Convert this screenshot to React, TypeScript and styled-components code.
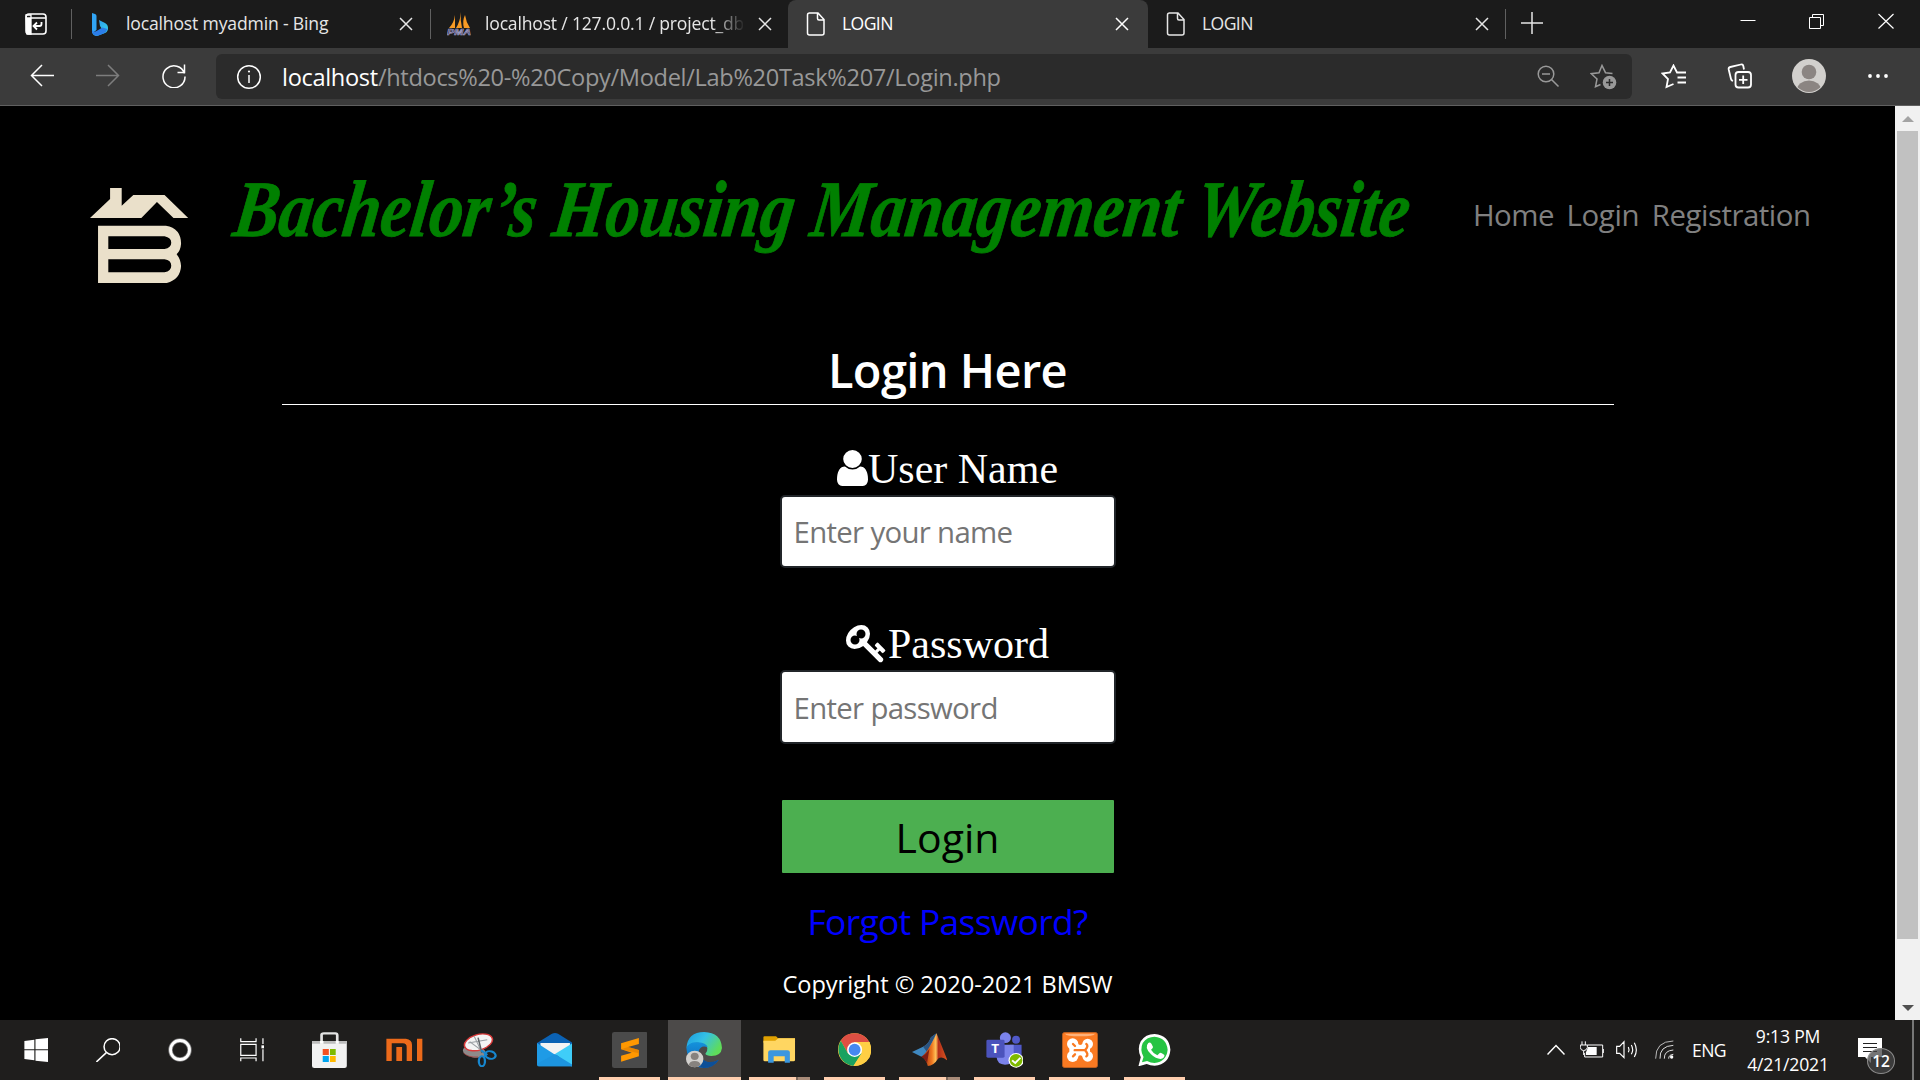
import React from "react";
import styled, { createGlobalStyle } from "styled-components";

const GlobalStyle = createGlobalStyle`
  * { box-sizing: border-box; }
  html, body { margin: 0; padding: 0; background: #000; overflow: hidden; }
  body { font-family: "Open Sans", "Noto Sans", sans-serif; }
  svg { display: block; flex: none; }
`;

const Desktop = styled.div`
  width: 1920px;
  height: 1080px;
  display: flex;
  flex-direction: column;
  overflow: hidden;
`;

/* ---------- Tab strip ---------- */

const TabStrip = styled.div`
  height: 48px;
  flex: none;
  display: flex;
  background: #1b1b1b;
  color: #e6e6e6;
`;

const TabActions = styled.div`
  width: 71px;
  height: 48px;
  padding: 13px 0 0 25px;
`;

const TabDivider = styled.div`
  width: 1px;
  height: 30px;
  margin-top: 9px;
  background: #606060;
`;

const TabBox = styled.div<{ $width: number; $active?: boolean }>`
  width: ${(p) => p.$width}px;
  height: 48px;
  flex: none;
  display: flex;
  align-items: center;
  padding-left: 16px;
  background: ${(p) => (p.$active ? "#3b3b3b" : "transparent")};
  color: ${(p) => (p.$active ? "#fff" : "#e6e6e6")};
  border-radius: 8px 8px 0 0;
`;

const TabIcon = styled.div`
  width: 24px;
  display: flex;
  justify-content: center;
`;

const TabLabel = styled.div<{ $fade?: boolean; $spacing?: number }>`
  width: 258px;
  margin: 0 15px 2px 14px;
  font-size: 17.6px;
  line-height: 30px;
  letter-spacing: ${(p) => p.$spacing ?? 0}px;
  white-space: nowrap;
  overflow: hidden;
  ${(p) => (p.$fade ? "mask-image: linear-gradient(90deg, #000 88%, transparent 101%);" : "")}
`;

const NewTab = styled.div`
  width: 54px;
  padding: 12px 0 0 15px;
`;

const WindowButtons = styled.div`
  margin-left: auto;
  display: flex;
  gap: 53px;
  padding: 13px 26px 0 0;
`;

/* ---------- Toolbar ---------- */

const Toolbar = styled.div`
  height: 58px;
  flex: none;
  display: flex;
  align-items: flex-start;
  background: #3b3b3b;
  border-bottom: 1px solid #606060;
  color: #fff;
`;

const NavButtons = styled.div`
  width: 216px;
  display: flex;
  gap: 42px;
  padding: 16px 0 0 30px;
`;

const AddressBar = styled.div`
  width: 1416px;
  height: 45px;
  margin-top: 6px;
  padding: 0 15px 0 20px;
  display: flex;
  align-items: center;
  background: #2b2b2b;
  border-radius: 6px;
`;

const Url = styled.div`
  flex: 1;
  margin-left: 20px;
  font-size: 23.6px;
  line-height: 44px;
  letter-spacing: -0.33px;
  color: #989898;
  white-space: nowrap;
`;

const UrlHost = styled.span`
  color: #fff;
`;

const AddressActions = styled.div`
  display: flex;
  align-items: center;
  gap: 30px;
  color: #999;
`;

const ToolbarActions = styled.div`
  display: flex;
  align-items: center;
  height: 56px;
  padding-left: 29px;
  gap: 40px;
`;

/* ---------- Page ---------- */

const Viewport = styled.div`
  height: 914px;
  flex: none;
  display: flex;
  background: #000;
`;

const Page = styled.div`
  width: 1895px;
  display: flex;
  flex-direction: column;
  align-items: center;
`;

const SiteHeader = styled.header`
  width: 100%;
  height: 234px;
  flex: none;
  display: flex;
  align-items: flex-start;
  padding: 49px 0 0 90px;
`;

const LogoBox = styled.div`
  width: 141px;
  padding-top: 33px;
`;

const TitleBox = styled.div`
  width: 1242px;
`;

const SiteTitle = styled.h1`
  margin: 3px 0 0;
  display: inline-block;
  font: italic 700 80px/102px "Liberation Serif", serif;
  color: #008000;
  -webkit-text-stroke: 0.8px #008000;
  white-space: nowrap;
  transform: scaleX(0.847) skewX(-9deg);
  transform-origin: 0 78%;
`;

const SiteNav = styled.nav`
  display: flex;
  gap: 12.5px;
  padding-top: 40px;
`;

const NavLink = styled.a<{ $spacing: number }>`
  font-size: 29.4px;
  line-height: 40px;
  letter-spacing: ${(p) => p.$spacing}px;
  color: #808080;
`;

const Heading = styled.h2`
  margin: 0;
  font-size: 47px;
  font-weight: 600;
  line-height: 60px;
  letter-spacing: -0.6px;
  color: #fff;
`;

const Rule = styled.div`
  width: 1332px;
  height: 1px;
  margin-top: 4px;
  background: #fff;
`;

const FieldLabel = styled.label<{ $top: number }>`
  height: 49px;
  margin-top: ${(p) => p.$top}px;
  display: flex;
  align-items: center;
  padding-top: 1px;
  font: 42px/49px "Liberation Serif", serif;
  color: #fff;
`;

const Field = styled.input<{ $height: number }>`
  width: 336px;
  height: ${(p) => p.$height}px;
  margin-top: 2px;
  padding: 1px 0 0 12px;
  border: 2px solid #212529;
  border-radius: 5px;
  background: #fff;
  outline: none;
  font: 29.4px "Open Sans", sans-serif;
  letter-spacing: -0.68px;
  &::placeholder { color: #757575; opacity: 1; }
`;

const LoginButton = styled.button`
  width: 332px;
  height: 73px;
  margin-top: 56px;
  padding: 0;
  border: 0;
  border-radius: 1px;
  background: #4caf50;
  color: #000;
  font: 41px/75px "Open Sans", sans-serif;
`;

const ForgotLink = styled.a`
  margin-top: 23px;
  font-size: 35.4px;
  line-height: 50px;
  letter-spacing: -0.7px;
  color: #0000ff;
`;

const Copyright = styled.div`
  margin-top: 18px;
  font-size: 23.6px;
  line-height: 40px;
  letter-spacing: -0.05px;
  color: #fff;
`;

const Scrollbar = styled.div`
  width: 25px;
  background: #f1f1f1;
  display: flex;
  flex-direction: column;
  align-items: center;
  padding: 10px 0 9px;
  justify-content: space-between;
`;

const Thumb = styled.div`
  width: 21px;
  height: 808px;
  margin: 9px 0 auto;
  background: #c1c1c1;
`;

/* ---------- Taskbar ---------- */

const Taskbar = styled.div`
  height: 60px;
  flex: none;
  display: flex;
  background: #1f1e1d;
  color: #fff;
`;

const SystemSlots = styled.div`
  width: 292px;
  display: flex;
`;

const SystemSlot = styled.div`
  width: 72px;
  display: flex;
  align-items: center;
  justify-content: center;
`;

const AppSlot = styled.div`
  width: 75px;
  display: flex;
  flex-direction: column;
  align-items: center;
`;

const AppFace = styled.div<{ $active?: boolean }>`
  width: 73px;
  height: 57px;
  padding-top: 3px;
  display: flex;
  align-items: center;
  justify-content: center;
  background: ${(p) => (p.$active ? "#4c4a49" : "transparent")};
`;

const RunningBar = styled.div<{ $wide?: boolean; $stacked?: boolean }>`
  width: ${(p) => (p.$wide ? 73 : 61)}px;
  height: 3px;
  background: ${(p) =>
    p.$stacked
      ? "linear-gradient(90deg, #ffcfaf 47px, #7c6759 47px, #7c6759 49px, #a98c79 49px)"
      : "#ffcfaf"};
`;

const Tray = styled.div`
  flex: 1;
  display: flex;
  align-items: center;
  justify-content: flex-end;
`;

const TrayIcon = styled.div<{ $gap: number }>`
  margin-right: ${(p) => p.$gap}px;
`;

const Language = styled.div`
  width: 34px;
  font-size: 17.6px;
  line-height: 30px;
  letter-spacing: -0.6px;
`;

const Clock = styled.div`
  width: 90px;
  margin: 0 25px 0 17px;
  font-size: 17.6px;
  line-height: 28px;
  letter-spacing: -0.2px;
  text-align: center;
`;

const Notifications = styled.div`
  position: relative;
  width: 54px;
  height: 24px;
`;

const Badge = styled.span`
  position: absolute;
  left: 9px;
  top: 10px;
  width: 28px;
  height: 26px;
  border: 1px solid #8c8c8c;
  border-radius: 50%;
  background: rgba(70, 70, 70, 0.75);
  font-size: 15.5px;
  font-weight: 600;
  line-height: 24px;
  text-align: center;
`;

const ShowDesktop = styled.div`
  width: 8px;
  height: 60px;
  border-left: 2px solid #777;
`;

/* ---------- Drawings ---------- */

type ArtProps = { box: string; sx: number; sy?: number; children: React.ReactNode };

/* Draws a view box at 1/sx by 1/sy of its own units. */
const Art = ({ box, sx, sy = 3, children }: ArtProps) => {
  const [, , w, h] = box.split(" ").map(Number);
  return (
    <svg width={w / sx} height={h / sy} viewBox={box} preserveAspectRatio="none" fill="none">
      {children}
    </svg>
  );
};

const line = { stroke: "currentColor", strokeWidth: 1.5, fill: "none", vectorEffect: "non-scaling-stroke" as const };

const CloseX = () => (
  <svg width="14" height="14" viewBox="0 0 14 14"><path d="M1 1l12 12M13 1L1 13" {...line} /></svg>
);

const PageIcon = () => (
  <svg width="20" height="24" viewBox="0 0 20 24">
    <path d="M3 1h9l6 6.500V21q0 2-2 2H3.500q-2 0-2-2V3q0-2 2-2zM11.500 1v5.500q0 1.500 1.500 1.500h5" {...line} />
  </svg>
);

const BingIcon = () => (
  <svg width="18" height="24" viewBox="0 0 18 24">
    <defs>
      <linearGradient id="bing" x1="0" y1="0" x2="1" y2="1">
        <stop offset="0" stopColor="#2a8df0" /><stop offset="1" stopColor="#37dbe8" />
      </linearGradient>
    </defs>
    <path d="M1 1l3 1q1.500.5 1.500 2v14L1.500 21Q1 20 1 18z" fill="#31a5f5" />
    <path d="M8 8l6 3q3 1.500 3 5t-3 5l-8 3q-4 0-5-4l5 0 5-3-2-3z" fill="url(#bing)" />
    <path d="M1 18q1 3 4.500 1l6-3.500 5 1.500q-1 3-4 4.500l-5 2q-5 1-6.500-3.500z" fill="#2b7de9" />
  </svg>
);

const PmaIcon = () => (
  <svg width="24" height="26" viewBox="0 0 24 26">
    <path d="M8 4v13H2Q7 12 8 4zM14 1q-1 8 1 16H9Q13 11 14 1zM18 4q1 7 5 13h-6q-2-7 1-13z" fill="#f79a25" />
    <text x="0" y="24" textLength="24" lengthAdjust="spacingAndGlyphs" fontFamily="Liberation Sans" fontWeight="700" fontStyle="italic" fontSize="9.500" fill="#32305c" stroke="#aaa8cf" strokeWidth=".6">PMA</text>
  </svg>
);

const HouseLogo = () => (
  <Art box="68 115 221 286" sx={2.24}>
    <path fill="#eae0ca" d="M68 205L113 148V115H139V168L165 136H235L288 205H255L218 157L183 205z" />
    <path fill="#eae0ca" fillRule="evenodd" d="M86 228H238Q272 236 272 282Q271 302 262 314Q271 328 272 350Q270 390 240 400H86zM109 260V298H235Q250 294 250 279T235 260zM109 329V368H235Q250 364 250 348T235 329z" />
  </Art>
);

const UserIcon = () => (
  <svg width="31" height="36" viewBox="256 128 1280 1536" fill="#fff" preserveAspectRatio="none" style={{ marginBottom: 3 }}>
    <path d="M1536 1399q0 109-62.500 187t-150.500 78h-854q-88 0-150.500-78t-62.500-187q0-85 8.500-160.500t31.500-152 58.500-131 94-89 134.500-34.500q131 128 313 128t313-128q76 0 134.500 34.500t94 89 58.500 131 31.500 152 8.500 160.500zm-256-887q0 159-112.500 271.500t-271.500 112.500-271.500-112.500-112.500-271.500 112.500-271.500 271.500-112.500 271.500 112.500 112.500 271.500z" />
  </svg>
);

const KeyIcon = () => (
  <svg width="42" height="39" viewBox="0 128 1792 1664" fill="#fff" preserveAspectRatio="none">
    <path d="M832 512q0-80-56-136t-136-56-136 56-56 136q0 42 19 83-41-19-83-19-80 0-136 56t-56 136 56 136 136 56 136-56 56-136q0-42-19-83 41 19 83 19 80 0 136-56t56-136zm851 704q0 17-49 66t-66 49q-9 0-28.500-16t-36.500-33-38.500-40-24.500-26l-96 96 220 220q28 28 28 68 0 42-39 81t-81 39q-40 0-68-28l-671-671q-176 131-365 131-163 0-265.500-102.500t-102.500-265.500q0-160 95-313t248-248 313-95q163 0 265.500 102.500t102.500 265.500q0 189-131 365l355 355 96-96q-3-3-26-24.500t-40-38.500-33-36.500-16-28.500q0-17 49-66t66-49q13 0 23 10 6 6 46 44.500t82 79.500 86.500 86 73 78 28.500 41z" />
  </svg>
);

const StoreIcon = () => (
  <Art box="813 66 91 108" sx={2.613}>
    <path d="M838 100V74Q838 70 844 70H874Q879 70 879 76V100" stroke="#e3e3e3" strokeWidth="7" />
    <path d="M813 93H904V168Q904 174 898 174H819Q813 174 813 168z" fill="#f2f2f2" />
    <path d="M813 93H904V101H813z" fill="#bdbdbd" />
    <path d="M834 93h9v8h-9zM875 93h8v8h-8z" fill="#fff" />
    <path d="M841 117h16v18h-16z" fill="#f25022" /><path d="M860 117h15v18h-15z" fill="#7fba00" />
    <path d="M841 138h16v18h-16z" fill="#00a4ef" /><path d="M860 138h15v18h-15z" fill="#ffb900" />
  </Art>
);

const MiIcon = () => (
  <Art box="1008 85 96 70" sx={2.613}>
    <path fill="#ec6a1a" d="M1009 87H1060Q1076 89 1076 106V154H1062V112Q1062 101 1052 101H1023V154H1009zM1035 112H1050V154H1035zM1089 87H1103V154H1089z" />
  </Art>
);

const SnipIcon = () => (
  <Art box="1206 68 92 104" sx={2.613}>
    <ellipse cx="1238" cy="124" rx="30" ry="18" fill="#8f8a8a" transform="rotate(10 1238 124)" />
    <path d="M1210 128Q1222 142 1248 140" stroke="#a33b38" strokeWidth="2" />
    <ellipse cx="1249" cy="96" rx="38" ry="23" fill="#f4f4f4" stroke="#d93a3a" strokeWidth="4" transform="rotate(-20 1249 96)" />
    <path d="M1222 98L1272 88M1238 78L1258 126M1226 94L1264 126" stroke="#9a9fa3" strokeWidth="3" />
    <path d="M1248 82L1258 128" stroke="#5f6468" strokeWidth="4" />
    <ellipse cx="1280" cy="134" rx="14" ry="11" stroke="#1787cf" strokeWidth="6" transform="rotate(20 1280 134)" />
    <ellipse cx="1258" cy="153" rx="8" ry="15" stroke="#1787cf" strokeWidth="6" />
    <path d="M1256 120L1270 132L1262 142" stroke="#1787cf" strokeWidth="6" />
  </Art>
);

const MailIcon = () => (
  <Art box="1401 68 94 100" sx={2.613}>
    <path d="M1401 98L1440 70Q1448 66 1456 70L1495 98V120H1401z" fill="#0b62b4" />
    <path d="M1410 98H1487V120L1448 136L1410 120z" fill="#f3f3f3" />
    <path d="M1401 98L1495 168H1406Q1401 168 1401 162z" fill="#1f9be6" />
    <path d="M1495 98V160Q1495 168 1490 168L1448 131z" fill="#3fcdf8" />
    <path d="M1401 160L1448 131L1495 164V168H1403z" fill="#1d95e0" />
  </Art>
);

const SublimeIcon = () => (
  <Art box="53 66 91 108" sx={2.529}>
    <rect x="53" y="66" width="91" height="108" rx="6" fill="#4a4a4a" />
    <path d="M76 100L121 84V102L94 111L121 120V139L76 155V137L103 128L76 118z" fill="#ff9800" />
    <path d="M94 111L121 120V130L76 118z" fill="#dc7c00" opacity=".6" />
  </Art>
);

const EdgeIcon = () => (
  <Art box="243 66 92 108" sx={2.529}>
    <defs>
      <linearGradient id="edgeTop" x1="0" y1="0" x2="1" y2=".5">
        <stop offset="0" stopColor="#1a9be0" /><stop offset=".5" stopColor="#34c1e6" /><stop offset="1" stopColor="#5fdc5a" />
      </linearGradient>
      <linearGradient id="edgeSide" x1="0" y1="0" x2="0" y2="1">
        <stop offset="0" stopColor="#1492dc" /><stop offset="1" stopColor="#0f62b4" />
      </linearGradient>
    </defs>
    <path d="M244 114Q247 66 289 66Q332 68 334 114Q332 138 307 138Q294 137 292 131Q298 124 297 114Q293 99 272 98Q252 98 244 114z" fill="url(#edgeTop)" />
    <path d="M244 114Q250 95 274 97Q294 99 298 112Q280 104 275 124Q272 146 296 156Q310 160 326 149Q312 174 288 174Q248 170 244 114z" fill="url(#edgeSide)" />
    <path d="M275 124Q275 148 296 155Q312 158 326 149Q313 174 287 174Q262 166 275 124z" fill="#0c4f98" />
    <ellipse cx="265" cy="147" rx="22" ry="25" fill="#d2d0cd" />
    <ellipse cx="265" cy="139" rx="10" ry="11" fill="#87827e" />
    <path d="M250 165Q252 153 265 153T280 165Q274 172 265 172T250 165z" fill="#87827e" />
  </Art>
);

const ExplorerIcon = () => (
  <Art box="437 80 82 82" sx={2.529}>
    <path d="M438 84Q438 81 441 81H470L475 87H518V100H438z" fill="#e0a100" />
    <path d="M438 94H468L476 87H518V152Q518 156 514 156H442Q438 156 438 152z" fill="#ffd661" />
    <path d="M450 160V129Q450 123 456 123H499Q505 123 505 129V160H492V141H464V160z" fill="#3b97df" />
  </Art>
);

const ChromeIcon = () => (
  <Art box="625 69 85 100" sx={2.529}>
    <ellipse cx="667" cy="119" rx="42" ry="49" fill="#ffcf44" />
    <path d="M632 92Q642 70 667 70T704 96H667L650 130z" fill="#dd4f43" />
    <path d="M632 92Q620 118 632 144Q643 165 664 168L685 130L650 130z" fill="#1aa260" />
    <path d="M667 96H705Q712 120 705 142Q692 168 664 168L685 130z" fill="#ffcf44" />
    <ellipse cx="667" cy="119" rx="19" ry="22" fill="#fff" />
    <ellipse cx="667" cy="119" rx="15" ry="18" fill="#4688f1" />
  </Art>
);

const MatlabIcon = () => (
  <Art box="812 69 91 100" sx={2.529}>
    <defs>
      <linearGradient id="peak" x1="0" y1="0" x2="1" y2="0">
        <stop offset="0" stopColor="#8a1f10" /><stop offset=".4" stopColor="#f07820" /><stop offset=".55" stopColor="#ffc25a" /><stop offset=".65" stopColor="#b5301a" /><stop offset="1" stopColor="#d9571f" />
      </linearGradient>
    </defs>
    <path d="M812 126L840 110Q853 104 860 82L874 70L852 134L836 140z" fill="#3f88c0" />
    <path d="M840 110Q853 104 860 82L874 70L850 126z" fill="#2c5480" />
    <path d="M836 140Q852 128 874 70Q884 98 902 152Q888 136 878 146Q866 168 852 168Q848 148 836 140z" fill="url(#peak)" />
    <path d="M836 140Q848 134 856 116L850 160Q846 146 836 140z" fill="#7c1d14" />
  </Art>
);

const TeamsIcon = () => (
  <Art box="1000 70 96 107" sx={2.529}>
    <ellipse cx="1076" cy="93" rx="10" ry="12" fill="#5059c9" />
    <path d="M1060 108H1090V138Q1088 154 1070 154z" fill="#5059c9" />
    <ellipse cx="1049" cy="87" rx="14" ry="16" fill="#7b83eb" />
    <path d="M1028 108H1070V144Q1068 168 1048 168T1027 146z" fill="#7b83eb" />
    <rect x="1001" y="93" width="46" height="54" rx="4" fill="#4b53bc" />
    <text x="1013" y="133" textLength="20" lengthAdjust="spacingAndGlyphs" fontFamily="Open Sans" fontWeight="700" fontSize="36" fill="#fff">T</text>
    <ellipse cx="1076" cy="155" rx="19" ry="22" fill="#fff" />
    <ellipse cx="1076" cy="155" rx="16" ry="19" fill="#7fba00" />
    <path d="M1066 155L1074 163L1087 147" stroke="#fff" strokeWidth="5" />
  </Art>
);

const XamppIcon = () => (
  <svg width="36" height="36" viewBox="18 18 108 108" fill="none">
    <rect x="19" y="19" width="106" height="106" rx="8" fill="#fa7a22" stroke="#b85c20" strokeWidth="2" />
    <path d="M27 23H117Q114 31 72 31T27 23z" fill="#ffb27a" />
    <g fill="#fff">
      <circle cx="50" cy="54" r="17" /><circle cx="50" cy="91" r="17" />
      <circle cx="95" cy="54" r="16" /><circle cx="95" cy="91" r="16" />
      <path d="M40 66L64 52Q72 62 82 52L102 66V79L82 93Q72 82 64 93L40 79z" />
    </g>
    <path d="M51 54L57 60M51 91L57 85M56 72.500H86M91 54Q99 60 87 72.500Q99 85 91 91" stroke="#fa7a22" strokeWidth="7" strokeLinecap="round" />
  </svg>
);

const WhatsappIcon = () => (
  <Art box="1385 71 83 98" sx={2.529}>
    <path d="M1386 168L1392 141Q1382 115 1392 93Q1404 71 1427 71Q1464 75 1467 118Q1464 162 1427 166Q1416 166 1407 161z" fill="#fff" />
    <path d="M1395 156L1399 140Q1389 119 1397 98Q1408 79 1427 79Q1457 82 1460 118Q1457 154 1427 158Q1417 158 1408 152z" fill="#26c443" />
    <path d="M1411 98Q1415 94 1419 100L1423 110Q1423 114 1418 118Q1424 130 1434 135L1440 128Q1442 126 1452 134Q1452 144 1442 146Q1430 146 1418 132Q1400 112 1411 98z" fill="#fff" />
  </Art>
);

/* ---------- Data ---------- */

const tabs = [
  { title: "localhost myadmin - Bing", icon: <BingIcon />, width: 358, spacing: -0.17 },
  { title: "localhost / 127.0.0.1 / project_db", icon: <PmaIcon />, width: 357, fade: true, spacing: -0.2 },
  { title: "LOGIN", icon: <PageIcon />, width: 360, active: true, spacing: -0.6 },
  { title: "LOGIN", icon: <PageIcon />, width: 357, spacing: -0.6 },
];

type App = { name: string; icon: React.ReactNode; running?: boolean; active?: boolean; stacked?: boolean };

const apps: App[] = [
  { name: "store", icon: <StoreIcon /> },
  { name: "mi", icon: <MiIcon /> },
  { name: "snip", icon: <SnipIcon /> },
  { name: "mail", icon: <MailIcon /> },
  { name: "sublime", icon: <SublimeIcon />, running: true },
  { name: "edge", icon: <EdgeIcon />, running: true, active: true },
  { name: "explorer", icon: <ExplorerIcon />, running: true, stacked: true },
  { name: "chrome", icon: <ChromeIcon />, running: true },
  { name: "matlab", icon: <MatlabIcon />, running: true, stacked: true },
  { name: "teams", icon: <TeamsIcon />, running: true },
  { name: "xampp", icon: <XamppIcon />, running: true },
  { name: "whatsapp", icon: <WhatsappIcon />, running: true },
];

export default function App() {
  return (
    <Desktop>
      <GlobalStyle />
      <TabStrip>
        <TabActions>
          <svg width="22" height="22" viewBox="0 0 22 22">
            <rect x="1" y="1" width="20" height="20" rx="3" stroke="#fff" strokeWidth="1.600" fill="none" />
            <path d="M1 5h20M1 2h5v19H2z" stroke="#fff" strokeWidth="1.300" fill="none" />
            <path d="M1 5h5v16H3q-2 0-2-2z" fill="#fff" />
            <path d="M16.500 9v2q0 2-2 2H9M12 9.500L8.500 13l3.500 3.500" stroke="#fff" strokeWidth="1.800" fill="none" />
          </svg>
        </TabActions>
        <TabDivider />
        {tabs.map((t, i) => (
          <React.Fragment key={i}>
            <TabBox $width={t.width} $active={t.active}>
              <TabIcon>{t.icon}</TabIcon>
              <TabLabel $fade={t.fade} $spacing={t.spacing}>{t.title}</TabLabel>
              <CloseX />
            </TabBox>
            {(i === 0 || i === 3) && <TabDivider />}
          </React.Fragment>
        ))}
        <NewTab>
          <svg width="22" height="22" viewBox="0 0 22 22"><path d="M11 0v22M0 11h22" {...line} /></svg>
        </NewTab>
        <WindowButtons>
          <svg width="16" height="16" viewBox="0 0 16 16"><path d="M.5 7.500h15" stroke="#fff" /></svg>
          <svg width="16" height="16" viewBox="0 0 16 16">
            <path d="M.5 4.500h11v11H.5zM3.500 4.500V1.500h11v11h-3" stroke="#fff" fill="none" />
          </svg>
          <svg width="16" height="16" viewBox="0 0 16 16"><path d="M.5 1l15 14.500M15.500 1L.5 15.500" stroke="#fff" strokeWidth="1.200" /></svg>
        </WindowButtons>
      </TabStrip>

      <Toolbar>
        <NavButtons>
          <svg width="24" height="24" viewBox="0 0 24 24"><path d="M24 11.500H1.500M12 1L1.500 11.500L12 22" {...line} /></svg>
          <svg width="24" height="24" viewBox="0 0 24 24" color="#7d7d7d"><path d="M0 11.500h22.500M12 1l10.500 10.500L12 22" {...line} /></svg>
          <svg width="24" height="24" viewBox="0 0 24 24"><path d="M22.500 9.500A11 11 0 1 0 23 12.500M22.500.5v8h-7" {...line} /></svg>
        </NavButtons>
        <AddressBar>
          <svg width="26" height="26" viewBox="0 0 26 26">
            <circle cx="13" cy="13" r="11.300" {...line} /><path d="M13 11v8" {...line} /><circle cx="13" cy="7.500" r="1.100" fill="#fff" />
          </svg>
          <Url><UrlHost>localhost</UrlHost>/htdocs%20-%20Copy/Model/Lab%20Task%207/Login.php</Url>
          <AddressActions>
            <svg width="23" height="23" viewBox="0 0 23 23">
              <circle cx="9" cy="9" r="7.800" {...line} /><path d="M14.500 14.500l7 7M5 9h8" {...line} />
            </svg>
            <svg width="27" height="26" viewBox="0 0 27 26">
              <path d="M22.500 9.500L15.500 8.700 12 1.500 9 8.700 1.200 9.700 7 15 5.500 22.800 10.500 20.500" {...line} />
              <circle cx="19.500" cy="18.500" r="6.800" fill="#999" /><path d="M19.500 15v7M16 18.500h7" stroke="#2b2b2b" strokeWidth="1.500" />
            </svg>
          </AddressActions>
        </AddressBar>
        <ToolbarActions>
          <svg width="26" height="25" viewBox="0 0 26 25">
            <path d="M12.500 20L5.500 23l1.500-8-5.500-5.500L9 8.500 12.500 1.500 16 8.500H25M16.500 13.500H25M16.500 18.500H25" {...line} strokeWidth={1.8} />
          </svg>
          <svg width="25" height="26" viewBox="0 0 25 26">
            <rect x="8.500" y="9" width="15.500" height="15.500" rx="3" {...line} strokeWidth={1.8} />
            <path d="M16.200 12.500v8.500M12 16.800h8.500M17 6.500L16.300 3Q15.800 1 13.800 1.500L3.300 4Q1.300 4.500 1.700 6.500L4 16Q4.300 17.500 6 18" {...line} strokeWidth={1.8} />
          </svg>
          <svg width="34" height="34" viewBox="0 0 34 34">
            <defs><clipPath id="face"><circle cx="17" cy="17" r="16" /></clipPath></defs>
            <circle cx="17" cy="17" r="17" fill="#d2d0cd" />
            <g clipPath="url(#face)" fill="#8b8582"><circle cx="17" cy="13" r="7.300" /><ellipse cx="17" cy="31" rx="12" ry="9.500" /></g>
          </svg>
          <svg width="24" height="6" viewBox="0 0 24 6" fill="#fff"><circle cx="4" cy="3" r="1.900" /><circle cx="12" cy="3" r="1.900" /><circle cx="20" cy="3" r="1.900" /></svg>
        </ToolbarActions>
      </Toolbar>

      <Viewport>
        <Page>
          <SiteHeader>
            <LogoBox><HouseLogo /></LogoBox>
            <TitleBox><SiteTitle>Bachelor’s Housing Management Website</SiteTitle></TitleBox>
            <SiteNav>
              <NavLink $spacing={-0.55}>Home</NavLink>
              <NavLink $spacing={-0.3}>Login</NavLink>
              <NavLink $spacing={-0.48}>Registration</NavLink>
            </SiteNav>
          </SiteHeader>
          <Heading>Login Here</Heading>
          <Rule />
          <FieldLabel $top={39}><UserIcon />User Name</FieldLabel>
          <Field $height={73} placeholder="Enter your name" />
          <FieldLabel $top={51}><KeyIcon />Password</FieldLabel>
          <Field $height={74} type="password" placeholder="Enter password" />
          <LoginButton>Login</LoginButton>
          <ForgotLink>Forgot Password?</ForgotLink>
          <Copyright>Copyright © 2020-2021 BMSW</Copyright>
        </Page>
        <Scrollbar>
          <svg width="12" height="6" viewBox="0 0 12 6"><path d="M0 6L6 0l6 6z" fill="#a3a3a3" /></svg>
          <Thumb />
          <svg width="12" height="6" viewBox="0 0 12 6"><path d="M0 0l6 6 6-6z" fill="#505050" /></svg>
        </Scrollbar>
      </Viewport>

      <Taskbar>
        <SystemSlots>
          <SystemSlot>
            <Art box="62 84 64 72" sx={2.613}>
              <path fill="#fff" d="M63 93L89 89V118H63zM92 88L125 84V118H92zM63 121H89V151L63 147zM92 121H125V156L92 152z" />
            </Art>
          </SystemSlot>
          <SystemSlot>
            <Art box="250 83 65 73" sx={2.613}>
              <ellipse cx="292" cy="109" rx="21" ry="24" {...line} /><path d="M277 127L251 155" {...line} />
            </Art>
          </SystemSlot>
          <SystemSlot>
            <svg width="24" height="24" viewBox="0 0 24 24"><circle cx="12" cy="12" r="9.500" stroke="#777" strokeWidth="4.500" fill="none" /><circle cx="12" cy="12" r="9.500" stroke="#fff" strokeWidth="2.800" fill="none" /></svg>
          </SystemSlot>
          <SystemSlot>
            <Art box="626 83 64 71" sx={2.613}>
              <path d="M628 84V94H668V84M628 102H668V135H628zM628 153V143H668V153M686 84V101M686 117V153" {...line} strokeWidth={1.2} />
              <path d="M682 105h8v9h-8z" fill="#fff" />
            </Art>
          </SystemSlot>
        </SystemSlots>
        {apps.map((a) => (
          <AppSlot key={a.name}>
            <AppFace $active={a.active}>{a.icon}</AppFace>
            {a.running && <RunningBar $wide={a.active} $stacked={a.stacked} />}
          </AppSlot>
        ))}
        <Tray>
          <TrayIcon $gap={15}>
            <svg width="18" height="12" viewBox="0 0 18 12"><path d="M.5 10.500L9 1.500l8.500 9" {...line} /></svg>
          </TrayIcon>
          <TrayIcon $gap={12}>
            <Art box="240 362 73 52" sx={3}>
              <path d="M262 374H308V410H254V398M311 386V398" stroke="#fff" strokeWidth="3" />
              <path d="M264 380H290V404H258V396z" fill="#fff" />
              <path d="M246 363V374M256 363V374M241 374H262V382Q260 390 251 391Q242 390 241 382zM251 391V404" stroke="#fff" strokeWidth="3" />
            </Art>
          </TrayIcon>
          <TrayIcon $gap={16}>
            <Art box="350 361 68 58" sx={3}>
              <path d="M352 380H361L374 366V414L361 401H352zM387 382Q391 390 387 398M396 376Q404 390 396 404M405 369Q417 390 405 412" stroke="#fff" strokeWidth="3.500" />
            </Art>
          </TrayIcon>
          <TrayIcon $gap={18}>
            <Art box="467 364 57 58" sx={3}>
              <path d="M469 420Q468 368 522 367" stroke="#bbb" strokeWidth="3" />
              <path d="M482 420Q480 382 522 380M495 420Q494 396 522 394M508 420Q508 408 522 407" stroke="#ddd" strokeWidth="3" />
              <circle cx="517" cy="415" r="5" fill="#fff" />
            </Art>
          </TrayIcon>
          <Language>ENG</Language>
          <Clock>9:13 PM<br />4/21/2021</Clock>
          <Notifications>
            <svg width="24" height="26" viewBox="0 0 24 26">
              <path d="M0 0h24v19H13v6l-6-6H0z" fill="#fff" /><path d="M5 5.500h14M5 9.500h14M5 13.500h14" stroke="#222" strokeWidth="1.200" />
            </svg>
            <Badge>12</Badge>
          </Notifications>
          <ShowDesktop />
        </Tray>
      </Taskbar>
    </Desktop>
  );
}
